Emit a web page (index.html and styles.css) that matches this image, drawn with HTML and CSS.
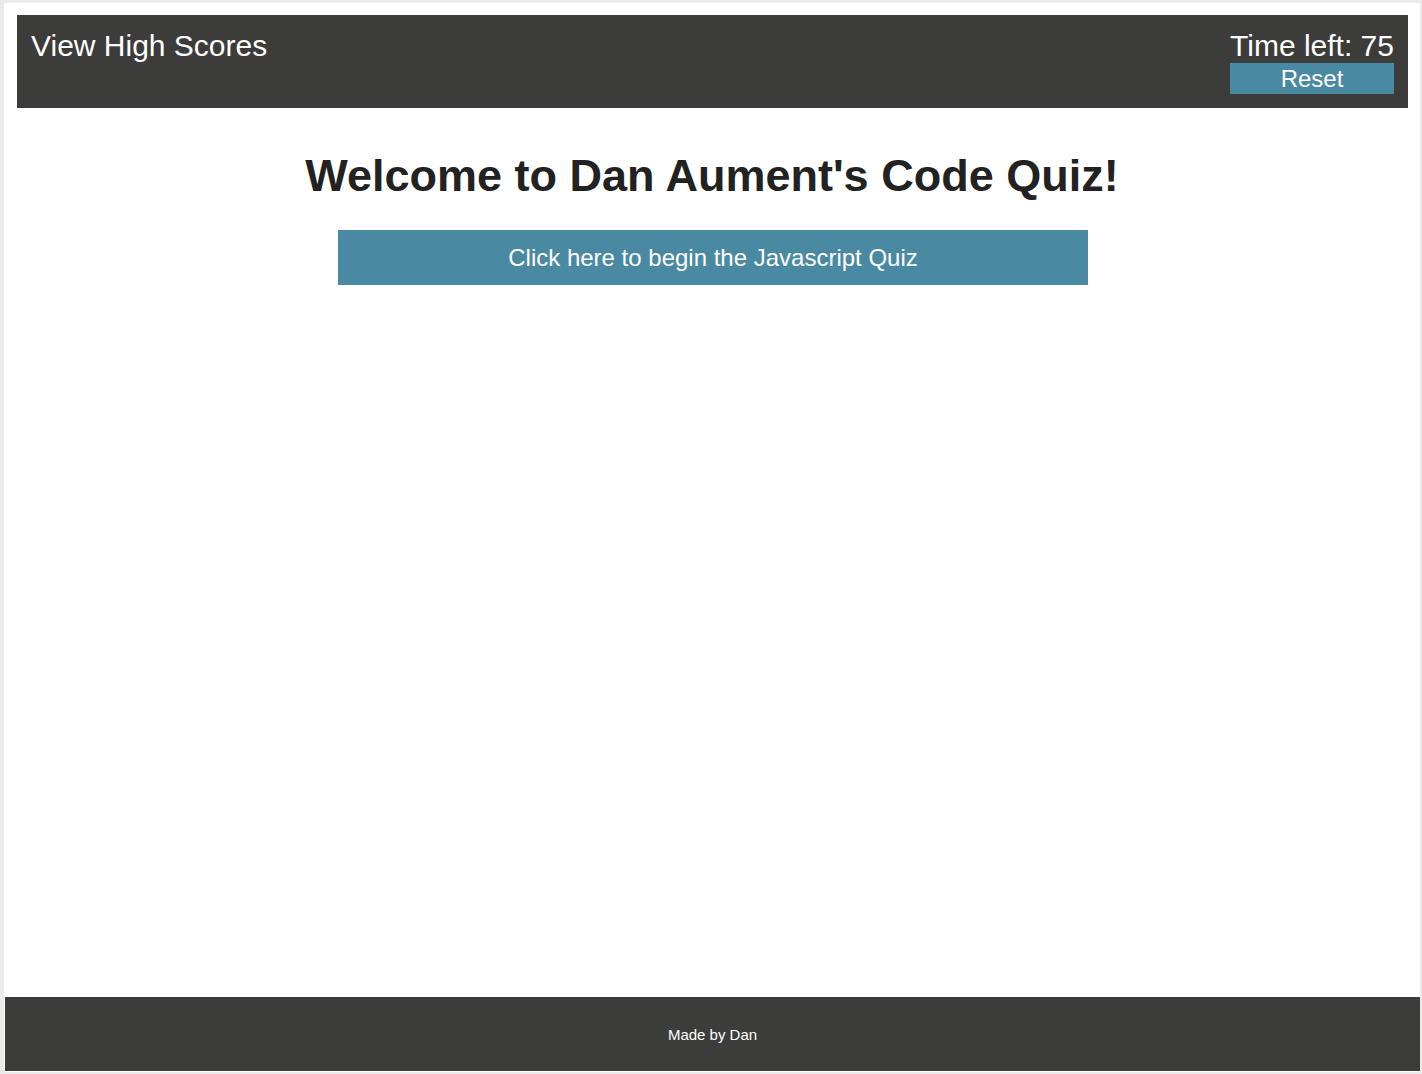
FILE: index.html
```html
<!DOCTYPE html>
<html lang="en">
<head>
<meta charset="utf-8">
<title>Code Quiz</title>
<link rel="stylesheet" href="styles.css">
</head>
<body>
<div class="page">
  <header class="topbar">
    <div class="scores-link">View High Scores</div>
    <div class="timer">
      <div class="time-left">Time left: 75</div>
      <button class="reset-btn">Reset</button>
    </div>
  </header>
  <main class="content">
    <h1 class="title">Welcome to Dan Aument's Code Quiz!</h1>
    <button class="start-btn">Click here to begin the Javascript Quiz</button>
  </main>
  <footer class="footer">Made by Dan</footer>
</div>
</body>
</html>
```

FILE: styles.css
```css
html, body {
  margin: 0;
  padding: 0;
  background: #ebebeb;
}

body {
  font-family: "Liberation Sans", Arial, sans-serif;
}

.page {
  margin: 3px 2px 0 4px;
  height: 1069px;
  background: #ffffff;
  display: flex;
  flex-direction: column;
}

.topbar {
  margin: 12px 12px 0 13px;
  background: #3c3c3b;
  color: #ffffff;
  padding: 13px 14px 14px 14px;
  display: flex;
  justify-content: space-between;
  align-items: flex-start;
}

.scores-link {
  font-size: 30px;
  line-height: 35px;
}

.timer {
  display: flex;
  flex-direction: column;
  align-items: stretch;
}

.time-left {
  font-size: 30px;
  line-height: 35px;
}

.reset-btn {
  border: none;
  margin: 0;
  padding: 0;
  height: 31px;
  background: #4a89a2;
  color: #ffffff;
  font-family: "Liberation Sans", Arial, sans-serif;
  font-size: 24px;
  line-height: 31px;
}

.content {
  flex: 1;
  display: flex;
  flex-direction: column;
  align-items: center;
}

.title {
  margin: 42px 0 0 0;
  font-size: 45px;
  line-height: 52px;
  font-weight: bold;
  color: #222222;
}

.start-btn {
  margin: 28px 0 0 2px;
  width: 750px;
  height: 55px;
  border: none;
  background: #4a89a2;
  color: #ffffff;
  font-family: "Liberation Sans", Arial, sans-serif;
  font-size: 24px;
}

.footer {
  margin: 0 0 1px 1px;
  height: 74px;
  background: #3c3c3b;
  color: #ffffff;
  font-size: 15px;
  display: flex;
  align-items: center;
  justify-content: center;
}
```
